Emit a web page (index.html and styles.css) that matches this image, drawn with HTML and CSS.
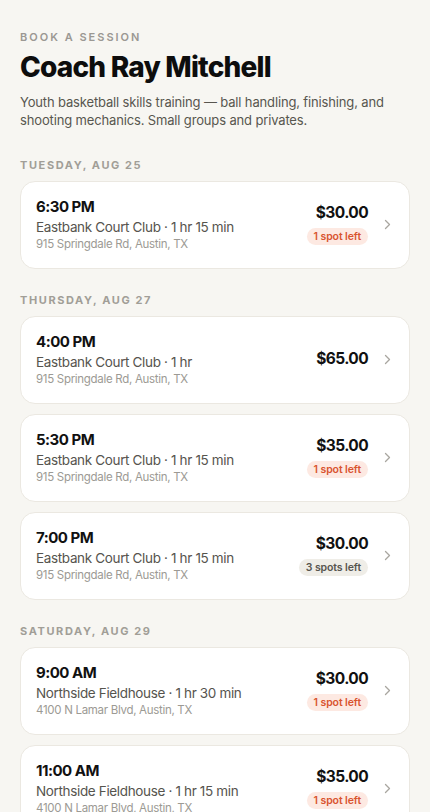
FILE: index.html
```html
<!DOCTYPE html>
<html lang="en">

<head>
    <meta charset="UTF-8">
    <title>Book a Session</title>
    <link rel="stylesheet" href="styles.css">
</head>

<body>
    <div class="page">
        <header class="intro">
            <div class="eyebrow">Book a Session</div>
            <h1>Coach Ray Mitchell</h1>
            <p>Youth basketball skills training — ball handling, finishing, and shooting mechanics. Small groups and privates.</p>
        </header>

        <section class="day">
            <h2>Tuesday, Aug 25</h2>
            <div class="slot">
                <div class="info">
                    <div class="time">6:30 PM</div>
                    <div class="venue">Eastbank Court Club · 1 hr 15 min</div>
                    <div class="address">915 Springdale Rd, Austin, TX</div>
                </div>
                <div class="side">
                    <div class="price">$30.00</div>
                    <span class="badge low">1 spot left</span>
                </div>
                <svg class="chevron" width="7" height="11" viewBox="0 0 7 11"><path d="M1.5 1.5l4 4-4 4" fill="none" stroke="currentColor" stroke-width="1.3" stroke-linecap="round" stroke-linejoin="round"/></svg>
            </div>
        </section>

        <section class="day">
            <h2>Thursday, Aug 27</h2>
            <div class="slot">
                <div class="info">
                    <div class="time">4:00 PM</div>
                    <div class="venue">Eastbank Court Club · 1 hr</div>
                    <div class="address">915 Springdale Rd, Austin, TX</div>
                </div>
                <div class="side">
                    <div class="price">$65.00</div>
                </div>
                <svg class="chevron" width="7" height="11" viewBox="0 0 7 11"><path d="M1.5 1.5l4 4-4 4" fill="none" stroke="currentColor" stroke-width="1.3" stroke-linecap="round" stroke-linejoin="round"/></svg>
            </div>
            <div class="slot">
                <div class="info">
                    <div class="time">5:30 PM</div>
                    <div class="venue">Eastbank Court Club · 1 hr 15 min</div>
                    <div class="address">915 Springdale Rd, Austin, TX</div>
                </div>
                <div class="side">
                    <div class="price">$35.00</div>
                    <span class="badge low">1 spot left</span>
                </div>
                <svg class="chevron" width="7" height="11" viewBox="0 0 7 11"><path d="M1.5 1.5l4 4-4 4" fill="none" stroke="currentColor" stroke-width="1.3" stroke-linecap="round" stroke-linejoin="round"/></svg>
            </div>
            <div class="slot">
                <div class="info">
                    <div class="time">7:00 PM</div>
                    <div class="venue">Eastbank Court Club · 1 hr 15 min</div>
                    <div class="address">915 Springdale Rd, Austin, TX</div>
                </div>
                <div class="side">
                    <div class="price">$30.00</div>
                    <span class="badge">3 spots left</span>
                </div>
                <svg class="chevron" width="7" height="11" viewBox="0 0 7 11"><path d="M1.5 1.5l4 4-4 4" fill="none" stroke="currentColor" stroke-width="1.3" stroke-linecap="round" stroke-linejoin="round"/></svg>
            </div>
        </section>

        <section class="day">
            <h2>Saturday, Aug 29</h2>
            <div class="slot">
                <div class="info">
                    <div class="time">9:00 AM</div>
                    <div class="venue">Northside Fieldhouse · 1 hr 30 min</div>
                    <div class="address">4100 N Lamar Blvd, Austin, TX</div>
                </div>
                <div class="side">
                    <div class="price">$30.00</div>
                    <span class="badge low">1 spot left</span>
                </div>
                <svg class="chevron" width="7" height="11" viewBox="0 0 7 11"><path d="M1.5 1.5l4 4-4 4" fill="none" stroke="currentColor" stroke-width="1.3" stroke-linecap="round" stroke-linejoin="round"/></svg>
            </div>
            <div class="slot">
                <div class="info">
                    <div class="time">11:00 AM</div>
                    <div class="venue">Northside Fieldhouse · 1 hr 15 min</div>
                    <div class="address">4100 N Lamar Blvd, Austin, TX</div>
                </div>
                <div class="side">
                    <div class="price">$35.00</div>
                    <span class="badge low">1 spot left</span>
                </div>
                <svg class="chevron" width="7" height="11" viewBox="0 0 7 11"><path d="M1.5 1.5l4 4-4 4" fill="none" stroke="currentColor" stroke-width="1.3" stroke-linecap="round" stroke-linejoin="round"/></svg>
            </div>
        </section>
    </div>
</body>

</html>
```

FILE: styles.css
```css
body {
    margin: 0;
    font-family: Inter, "Liberation Sans", sans-serif;
    background-color: #f7f6f2;
    color: #111;
}

.page {
    padding: 30px 20px 40px;
}

.intro {
    padding-bottom: 5px;
}

.eyebrow {
    font-size: 11px;
    line-height: 14px;
    font-weight: 600;
    letter-spacing: 2px;
    text-transform: uppercase;
    color: #9b9893;
}

h1 {
    margin: 6px 0 0;
    font-size: 28px;
    line-height: 34px;
    font-weight: 800;
    letter-spacing: -0.8px;
    color: #0d0d0d;
}

.intro p {
    margin: 9px 0 0;
    font-size: 13px;
    line-height: 18px;
    letter-spacing: -0.15px;
    color: #58564f;
}

.day {
    margin-top: 24px;
}

.day h2 {
    margin: 0 0 9px;
    font-size: 11px;
    line-height: 14px;
    font-weight: 700;
    letter-spacing: 1.6px;
    text-transform: uppercase;
    color: #a19e97;
}

.slot {
    display: flex;
    align-items: center;
    padding: 15px 18px 17px 15px;
    margin-bottom: 10px;
    background-color: #fff;
    border: 1px solid #ebe8e1;
    border-radius: 15px;
}

.info {
    flex-grow: 1;
}

.time {
    font-size: 15px;
    line-height: 20px;
    font-weight: 700;
    letter-spacing: -0.5px;
}

.venue {
    font-size: 13.5px;
    line-height: 20px;
    letter-spacing: -0.35px;
    color: #56544e;
}

.address {
    font-size: 11.5px;
    line-height: 14px;
    letter-spacing: -0.3px;
    color: #9c9a94;
}

.side {
    display: flex;
    flex-direction: column;
    align-items: flex-end;
    gap: 5px;
}

.price {
    font-size: 15.5px;
    line-height: 20px;
    font-weight: 700;
    letter-spacing: -0.6px;
}

.badge {
    display: inline-block;
    padding: 0 7px;
    font-size: 10.5px;
    line-height: 17px;
    font-weight: 600;
    letter-spacing: -0.1px;
    border-radius: 9px;
    background-color: #efede7;
    color: #57554f;
}

.badge.low {
    background-color: #fde9e2;
    color: #d9542f;
}

.chevron {
    margin-left: 16px;
    color: #a9a6a0;
}
```
